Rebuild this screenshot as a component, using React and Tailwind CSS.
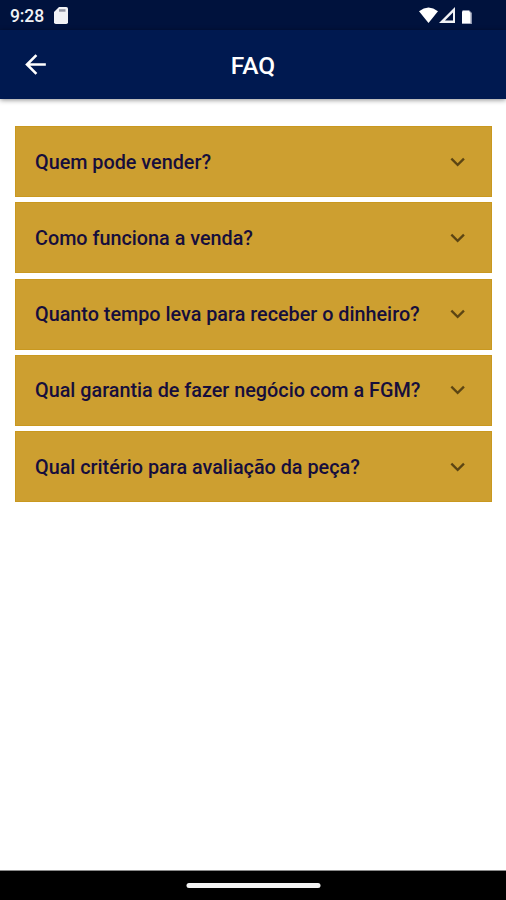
const questions = [
  "Quem pode vender?",
  "Como funciona a venda?",
  "Quanto tempo leva para receber o dinheiro?",
  "Qual garantia de fazer negócio com a FGM?",
  "Qual critério para avaliação da peça?",
];

function StatusBar() {
  return (
    <div className="flex h-[30px] shrink-0 items-center bg-[#00123d] pl-[10px] pr-[34px] pt-[1px] text-[#f1f2f5]">
      <span className="w-[43.5px] whitespace-nowrap pt-[2px] text-[17.5px] font-medium leading-none tracking-[-0.1px]">9:28</span>
      <svg className="h-[17px] w-[14px]" viewBox="0 0 14 17" fill="currentColor">
        <path d="M5 0h7.2A1.8 1.8 0 0 1 14 1.800v13.400a1.800 1.800 0 0 1-1.800 1.800H1.800A1.800 1.800 0 0 1 0 15.200V5z" />
        <path d="M5 2.200h6.500v2.500H5z" fill="#9295a2" />
      </svg>
      <div className="ml-auto flex items-center">
        <svg className="h-[17px] w-[19px]" viewBox="0 0 19 17" fill="#fff">
          <path d="M0 4.200Q9.500-3 19 4.200L9.500 16z" />
        </svg>
        <svg className="ml-[1px] h-[17px] w-[16px]" viewBox="0 0 16 17" fill="currentColor">
          <path fillRule="evenodd" d="M16 0v16H0zM14 5.500L6 13.500h8z" />
        </svg>
        <svg className="ml-[7px] mt-[2px] h-[14px] w-[10px]" viewBox="0 0 10 14">
          <path d="M0 1l1-1h6l3 3v11H0z" fill="#8991aa" />
          <path d="M0 2l1-1h6L8.500 3v10.200H0z" fill="#fff" />
        </svg>
      </div>
    </div>
  );
}

function Header() {
  return (
    <header className="grid h-[69px] shrink-0 grid-cols-[1fr_auto_1fr] items-center bg-[#001950] px-5 text-white shadow-[0_1px_5px_rgba(0,0,0,0.45)]">
      <button aria-label="Voltar" className="w-[31px]">
        <svg className="h-[31px] w-[31px]" viewBox="0 0 24 24" fill="currentColor">
          <path d="M20 11H7.830l5.590-5.590L12 4l-8 8 8 8 1.410-1.410L7.830 13H20v-2z" />
        </svg>
      </button>
      <h1 className="pt-[3px] text-[24.500px] font-medium leading-none">FAQ</h1>
    </header>
  );
}

function Question({ text }) {
  return (
    <button className="flex h-[71px] w-full items-center justify-between border border-[#c9981f] bg-[#cd9f30] pl-[19px] pr-[19.5px] text-left">
      <span className="whitespace-nowrap pt-[2px] text-[19.8px] font-medium leading-[20px] text-[#160e3c]">{text}</span>
      <svg className="h-[28px] w-[28px] text-[#5c4513]" viewBox="0 0 24 24" fill="currentColor">
        <path d="M16.400 8.400L11.700 13.100 7 8.400 5.600 9.800l6.100 6.100 6.100-6.100z" />
      </svg>
    </button>
  );
}

export default function App() {
  return (
    <div className="flex h-[900px] w-[506px] flex-col overflow-hidden bg-white font-['Roboto',sans-serif]">
      <StatusBar />
      <Header />
      <main className="flex flex-1 flex-col gap-[5.3px] pl-[15px] pr-[14px] pt-[27px]">
        {questions.map((q) => (
          <Question key={q} text={q} />
        ))}
      </main>
      <div className="flex h-[30px] shrink-0 items-center justify-center border-t border-[#8a8a8a] bg-black">
        <div className="h-[5px] w-[134px] translate-x-[0.5px] rounded-full bg-[#f3f3f3]" />
      </div>
    </div>
  );
}
